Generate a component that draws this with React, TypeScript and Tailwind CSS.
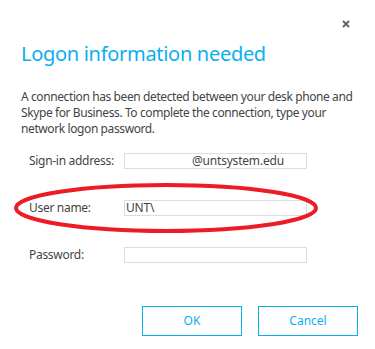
import React from "react"

const fields = [
  { label: "Sign-in address:", value: "@untsystem.edu", indent: true },
  { label: "User name:", value: "UNT\\", indent: false },
  { label: "Password:", value: "", indent: false },
]

export default function App() {
  return (
    <div
      className="relative w-[375px] h-[349px] bg-white text-[#444444] overflow-hidden"
      style={{ fontFamily: '"Noto Sans", "Open Sans", sans-serif' }}
    >
      {/* close */}
      <div className="flex justify-end pt-[20px] pr-[25px]">
        <svg width="8" height="8" viewBox="0 0 8 8">
          <path d="M1 1L7 7M7 1L1 7" stroke="#666666" strokeWidth="2" />
        </svg>
      </div>

      <h1 className="pl-[21px] mt-[12px] text-[20px] leading-[28px] text-[#0aaff0] tracking-[-0.3px]">
        Logon information needed
      </h1>

      <p className="pl-[21px] pr-[10px] mt-[21px] text-[12px] leading-[16px] tracking-[-0.4px]">
        A connection has been detected between your desk phone and Skype for Business. To complete the connection, type your network logon password.
      </p>

      <div className="mt-[16px] flex flex-col gap-[31px] pl-[29px]">
        {fields.map((f) => (
          <div key={f.label} className="flex items-center h-[16px]">
            <span className="w-[95px] text-[12px] tracking-[-0.3px]">{f.label}</span>
            <div className="w-[183px] h-[16px] border border-[#dcdcdc] flex items-center text-[12px] leading-none tracking-[-0.2px]">
              <span className={f.indent ? "pl-[67px]" : "pl-[1px]"}>{f.value}</span>
            </div>
          </div>
        ))}
      </div>

      <div className="mt-[43px] flex justify-end gap-[16px] pr-[17px]">
        <button className="w-[100px] h-[30px] border border-[#0aaff0] text-[#0aaff0] text-[12px]">OK</button>
        <button className="w-[100px] h-[30px] border border-[#0aaff0] text-[#0aaff0] text-[12px]">Cancel</button>
      </div>

      {/* annotation */}
      <svg className="absolute left-0 top-0 pointer-events-none" width="375" height="349">
        <ellipse cx="166" cy="208" rx="150" ry="23" fill="none" stroke="#ed1c24" strokeWidth="4" />
      </svg>
    </div>
  )
}
